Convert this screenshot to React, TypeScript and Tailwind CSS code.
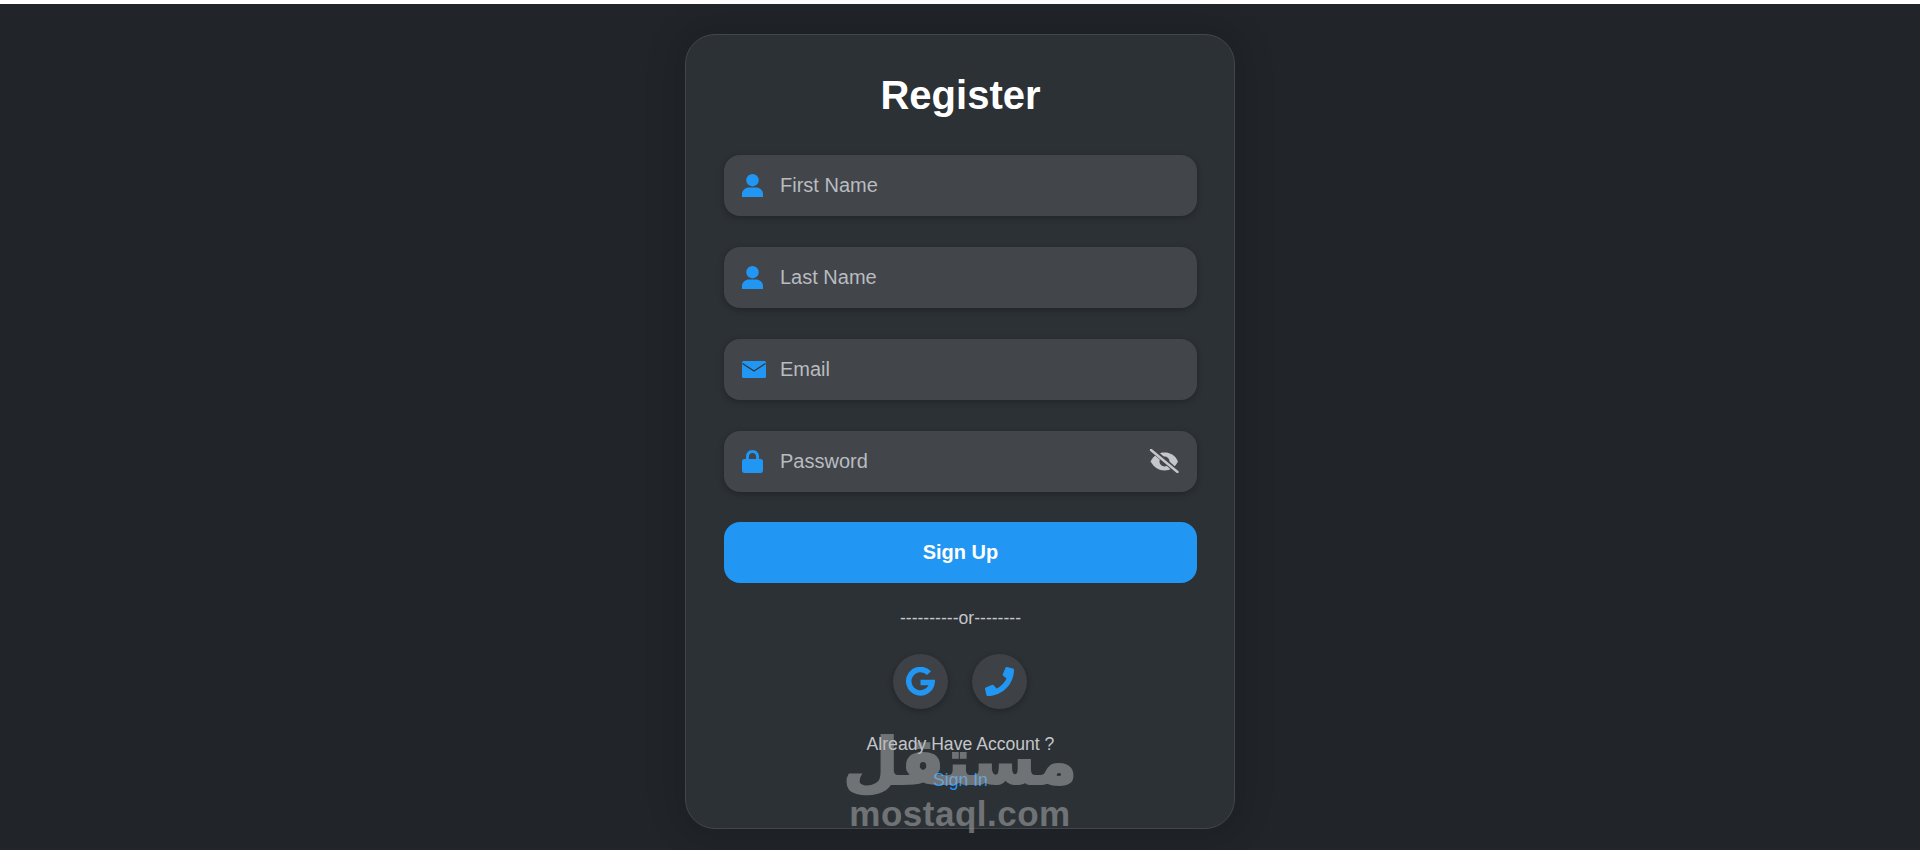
import { FaPhone } from 'react-icons/fa'
import type { ReactNode } from 'react'

const UserIcon = () => (
  <svg width="21" height="23" viewBox="0 0 21 23" fill="currentColor">
    <circle cx="10.5" cy="6.2" r="6.2" />
    <path d="M0 23v-3.2C0 16 3.6 13.4 7 13.4h7c3.4 0 7 2.6 7 6.4V23z" />
  </svg>
)

const MailIcon = () => (
  <svg width="24" height="17" viewBox="0 0 24 17">
    <rect width="24" height="17" rx="1.5" fill="currentColor" />
    <path d="M0.5 2.5 12 10l11.5-7.5" fill="none" stroke="#33363b" strokeWidth="1.4" />
  </svg>
)

const LockIcon = () => (
  <svg width="21" height="23" viewBox="0 0 21 23" fill="currentColor">
    <path d="M10.5 0C6.6 0 4 2.9 4 6.6V9H2.2C1 9 0 10 0 11.2v9.6C0 22 1 23 2.2 23h16.6c1.2 0 2.2-1 2.2-2.2v-9.6C21 10 20 9 18.8 9H17V6.6C17 2.9 14.4 0 10.5 0zm0 3c2.2 0 3.6 1.6 3.6 3.8V9H6.900V6.800C6.900 4.600 8.300 3 10.500 3z" />
  </svg>
)

const EyeOffIcon = () => (
  <svg width="30" height="24" viewBox="0 0 30 24">
    <path d="M1.500 12.500C5 6 10 3.500 15.500 3.500S26 6 29 12.500C26 18.500 21 21.500 15.500 21.500S5 18.500 1.500 12.500z" fill="#c4c6c9" />
    <circle cx="15.500" cy="12.500" r="5" fill="#42454a" />
    <path d="M3 0.500 29 23.500" stroke="#42454a" strokeWidth="5" />
    <path d="M2 1 28.500 23" stroke="#c4c6c9" strokeWidth="2.400" strokeLinecap="round" />
  </svg>
)

const GoogleIcon = () => (
  <svg width="29" height="29" viewBox="0 0 29 29" fill="none" stroke="currentColor" strokeWidth="5.500">
    <path d="M23 6.200A11.700 11.700 0 1 0 26.100 15.500H14.500" />
  </svg>
)

function Field({ icon, placeholder, type = 'text', trailing }: { icon: ReactNode; placeholder: string; type?: string; trailing?: ReactNode }) {
  return (
    <div className="h-[60.5px] rounded-[16px] bg-[#42454a] shadow-[0_2px_6px_rgba(0,0,0,0.25)] flex items-center pl-[18px] pr-[18px]">
      <span className="w-[24px] flex justify-start text-[#2196f3]">{icon}</span>
      <input
        type={type}
        placeholder={placeholder}
        className="flex-1 ml-[14px] bg-transparent outline-none text-[20px] placeholder:text-[#b9bcc0] text-[#b9bcc0]"
      />
      {trailing}
    </div>
  )
}

export default function App() {
  return (
    <div className="h-[850px] overflow-hidden bg-white pt-[4px] font-['Liberation_Sans',Arial,sans-serif]">
      <div className="h-[846px] bg-[#212529] flex justify-center pt-[30px]">
        <div className="relative w-[550px] h-[795px] rounded-[30px] border border-[#43474c] bg-[#2c3135] shadow-[0_0_30px_12px_rgba(0,0,0,0.12)] pl-[38px] pr-[37px] pt-[37px]">
          <h1 className="text-[40px] leading-[46px] font-bold text-white text-center">Register</h1>

          <div className="mt-[37px] flex flex-col gap-[31.5px]">
            <Field icon={<UserIcon />} placeholder="First Name" />
            <Field icon={<UserIcon />} placeholder="Last Name" />
            <Field icon={<MailIcon />} placeholder="Email" />
            <Field
              icon={<LockIcon />}
              placeholder="Password"
              type="password"
              trailing={<EyeOffIcon />}
            />
          </div>

          <button className="mt-[30.5px] w-full h-[60.5px] rounded-[16px] bg-[#2196f3] text-white text-[20px] font-bold">Sign Up</button>

          <p className="mt-[25.5px] text-center text-[17.6px] leading-[20px] text-[#c4c6c9]">----------or--------</p>

          <div className="mt-[26px] mr-[1px] flex justify-center gap-[24px]">
            <a className="w-[55px] h-[55px] rounded-full bg-[#3e4146] shadow-[0_2px_6px_rgba(0,0,0,0.25)] flex items-center justify-center text-[#2196f3]">
              <GoogleIcon />
            </a>
            <a className="w-[55px] h-[55px] rounded-full bg-[#3e4146] shadow-[0_2px_6px_rgba(0,0,0,0.25)] flex items-center justify-center text-[#2196f3]">
              <FaPhone size={29} />
            </a>
          </div>

          <p className="mt-[25px] text-center text-[17.6px] leading-[20px] text-[#c4c6c9]">Already Have Account ?</p>
          <p className="mt-[16px] text-center text-[17.6px] leading-[20px]">
            <a className="text-[#2196f3]">Sign In</a>
          </p>

          {/* watermark */}
          <div className="absolute left-0 right-0 top-[693px] flex flex-col items-center text-[#b4b5b5] opacity-50 pointer-events-none">
            <span className="text-[64px] leading-[68px] font-bold font-['DejaVu_Sans',sans-serif] [-webkit-text-stroke:2px_#b4b5b5]">مستقل</span>
            <span className="text-[35px] leading-[36px] font-bold tracking-[0.5px]">mostaql.com</span>
          </div>
        </div>
      </div>
    </div>
  )
}
